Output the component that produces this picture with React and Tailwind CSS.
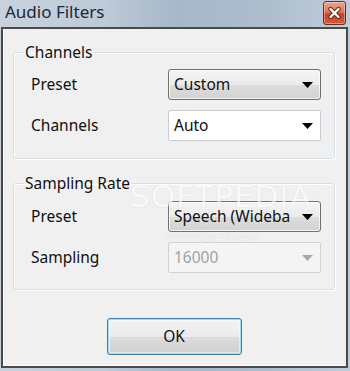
import React from "react";

const Arrow = ({ color = "#000" }) => (
  <svg width="11" height="6" viewBox="0 0 11 6" className="shrink-0">
    <path d="M0 0H11L5.5 6Z" fill={color} />
  </svg>
);

const ButtonCombo = ({ value }) => (
  <div className="w-[153px] h-[31px] rounded-[3px] border border-[#707070] bg-[linear-gradient(180deg,#f4f4f4_0%,#ebebeb_50%,#dddddd_51%,#d2d2d2_100%)] shadow-[inset_0_0_0_1px_rgba(255,255,255,0.7)] flex items-center pl-[5px] pr-[7px]">
    <span className="w-[117px] overflow-hidden whitespace-nowrap text-[15.5px] text-[#101010]">{value}</span>
    <span className="flex-1" />
    <Arrow />
  </div>
);

const EditCombo = ({ value, disabled }) => (
  <div
    className={
      disabled
        ? "w-[153px] h-[31px] rounded-[2px] border border-[#d2d2d2] bg-[#f4f4f4] flex items-center pl-[5px] pr-[7px]"
        : "w-[153px] h-[31px] rounded-[2px] border border-[#c9cbd0] bg-white flex items-center pl-[5px] pr-[7px]"
    }
  >
    <span className={disabled ? "flex-1 text-[15.5px] text-[#a3a3a3]" : "flex-1 text-[15.5px] text-[#101010]"}>{value}</span>
    <Arrow color={disabled ? "#a8a8a8" : "#000"} />
  </div>
);

const Row = ({ label, children }) => (
  <div className="flex items-center h-[31px] pl-[8px]">
    <span className="flex-1 text-[15.5px] text-[#101010]">{label}</span>
    {children}
  </div>
);

const Group = ({ title, children, className }) => (
  <fieldset className={"border border-[#d5dfe5] rounded-[3px] pl-[9px] pr-[13px] shadow-[inset_1px_1px_0_#fff,1px_1px_0_#fff] " + className}>
    <legend className="px-[2px] text-[15.5px] leading-[20px] text-[#101010]">{title}</legend>
    {children}
  </fieldset>
);

const CloseBtn = () => (
  <div className="mt-[1px] w-[23px] h-[24px] rounded-[3px] border border-[#6b2a1e] bg-[linear-gradient(180deg,#eba590_0%,#dd7458_45%,#c8432a_55%,#d35c3c_100%)] shadow-[inset_0_0_0_1px_rgba(255,255,255,0.35)] flex items-center justify-center">
    <svg width="13" height="12" viewBox="0 0 13 12">
      <path d="M2.5 2L10.5 10M10.5 2L2.5 10" stroke="#5a2418" strokeWidth="4.2" strokeLinecap="round" />
      <path d="M2.5 2L10.5 10M10.5 2L2.5 10" stroke="#ffffff" strokeWidth="2.4" strokeLinecap="round" />
    </svg>
  </div>
);

export default function App() {
  return (
    <div className="relative w-[350px] h-[371px] overflow-hidden flex flex-col bg-[linear-gradient(90deg,#c7d2dd_0%,#bdcad7_30%,#a7b8c9_50%,#adbdcd_75%,#bfcddb_100%)] font-['Noto_Sans',sans-serif]">
      <div className="h-[27px] flex items-start justify-between pl-[5px] pr-[4px]">
        <span className="text-[17px] leading-[24px] text-[#1b2838]">Audio Filters</span>
        <CloseBtn />
      </div>
      <div className="ml-[1px] mr-[2px] mb-[3px] flex-1 border-2 border-[#4a4a4a] flex">
        <div className="flex-1 bg-[#f0f0f0] border-l border-b border-white flex flex-col pl-[9px] pr-[11px]">
          <Group title="Channels" className="mt-[13px] pt-[7px] pb-[17px]">
            <div className="flex flex-col gap-[10px]">
              <Row label="Preset">
                <ButtonCombo value="Custom" />
              </Row>
              <Row label="Channels">
                <EditCombo value="Auto" />
              </Row>
            </div>
          </Group>
          <Group title="Sampling Rate" className="mt-[14px] pt-[8px] pb-[16px]">
            <div className="flex flex-col gap-[10px]">
              <Row label="Preset">
                <ButtonCombo value="Speech (Wideband)" />
              </Row>
              <Row label="Sampling">
                <EditCombo value="16000" disabled />
              </Row>
            </div>
          </Group>
          <button className="mt-[28px] self-center w-[135px] h-[37px] rounded-[3px] border border-[#3c7fb1] bg-[linear-gradient(180deg,#f2f2f2_0%,#ebebeb_50%,#dddddd_51%,#cfcfcf_100%)] shadow-[inset_0_0_0_1px_#9fdcf6,inset_0_0_0_2px_rgba(255,255,255,0.5)] text-[15.5px] text-[#101010]">
            OK
          </button>
        </div>
      </div>
      <div className="absolute left-[130px] top-[178px] text-[31px] leading-[36px] tracking-[1px] text-white opacity-60 [text-shadow:0_0_1px_#c4c4c4] pointer-events-none font-['DejaVu_Sans',sans-serif]">
        SOFTPEDIA<span className="text-[10px] align-top">™</span>
      </div>
      <div className="absolute left-[164px] top-[229px] text-[11px] leading-[14px] italic text-white opacity-70 [text-shadow:0_0_1px_#b0b0b0] pointer-events-none">
        www.softpedia.com
      </div>
    </div>
  );
}
